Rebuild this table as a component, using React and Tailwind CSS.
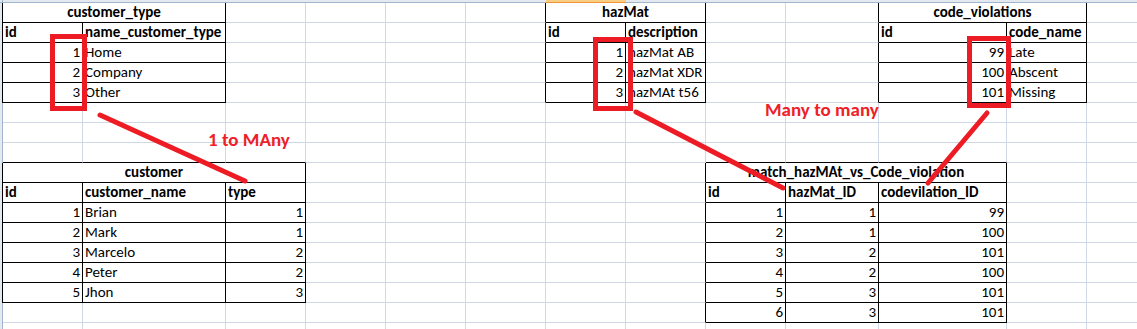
import React from "react";

const tables = [
  { r0: 1, c0: 1, c1: 2, title: "customer_type", headers: ["id", "name_customer_type"], rows: [[1, "Home"], [2, "Company"], [3, "Other"]] },
  { r0: 1, c0: 7, c1: 8, title: "hazMat", headers: ["id", "description"], rows: [[1, "hazMat AB"], [2, "hazMat XDR"], [3, "hazMAt t56"]] },
  { r0: 1, c0: 11, c1: 12, title: "code_violations", headers: ["id", "code_name"], rows: [[99, "Late"], [100, "Abscent"], [101, "Missing"]] },
  { r0: 9, c0: 1, c1: 3, title: "customer", headers: ["id", "customer_name", "type"], rows: [[1, "Brian", 1], [2, "Mark", 1], [3, "Marcelo", 2], [4, "Peter", 2], [5, "Jhon", 3]] },
  { r0: 9, c0: 9, c1: 11, title: "match_hazMAt_vs_Code_violation", headers: ["id", "hazMat_ID", "codevilation_ID"], rows: [[1, 1, 99], [2, 1, 100], [3, 2, 101], [4, 2, 100], [5, 3, 101], [6, 3, 101]] },
];

const NROWS = 17;
const NCOLS = 13;

function tableAt(r, c) {
  for (const t of tables) {
    const r1 = t.r0 + 1 + t.rows.length;
    if (r >= t.r0 && r <= r1 && c >= t.c0 && c <= t.c1) return t;
  }
  return null;
}

function cellContent(r, c) {
  const t = tableAt(r, c);
  if (!t) return null;
  const i = r - t.r0;
  const j = c - t.c0;
  if (i === 0) return { text: t.title, bold: true, align: "center", span: t.c1 - t.c0 + 1, start: j === 0 };
  if (i === 1) return { text: t.headers[j], bold: true, align: "left" };
  const v = t.rows[i - 2][j];
  return { text: String(v), bold: false, align: typeof v === "number" ? "right" : "left" };
}

const spanClass = { 1: "", 2: "col-span-2", 3: "col-span-3" };

function Sheet() {
  const cells = [];
  for (let c = 0; c <= NCOLS; c++) {
    const sel = c === 7;
    cells.push(
      <div
        key={`h-${c}`}
        className={
          sel
            ? "bg-[#f8cd84] border-b border-b-[#f29436]"
            : c === 0
            ? "bg-[#e4e9f0] border-b border-r border-b-[#9eb6ce] border-r-[#9eb6ce]"
            : "bg-[#e4e9f0] border-b border-b-[#9eb6ce]"
        }
      />
    );
  }
  for (let r = 1; r <= NROWS; r++) {
    cells.push(
      <div
        key={`l-${r}`}
        className={
          tableAt(r, 1)
            ? "bg-[#e4e9f0] border-r border-r-black"
            : "bg-[#e4e9f0] border-r border-r-[#9eb6ce]"
        }
      />
    );
    for (let c = 1; c <= NCOLS; c++) {
      const info = cellContent(r, c);
      if (info && info.span && !info.start) continue;
      const span = info && info.span ? info.span : 1;
      const lastC = c + span - 1;
      const inT = !!tableAt(r, c);
      const rightBlack = inT || !!tableAt(r, lastC + 1);
      let bottomBlack = false;
      for (let k = c; k <= lastC; k++) {
        if (tableAt(r, k) || tableAt(r + 1, k)) bottomBlack = true;
      }
      const cls = [
        "flex items-end whitespace-nowrap px-[2px] pb-[1px] text-[15px] leading-[17px] text-black border-r border-b",
        rightBlack ? "border-r-black" : "border-r-[#d0d7e5]",
        bottomBlack ? "border-b-black" : "border-b-[#d0d7e5]",
        spanClass[span],
        info && info.bold ? "font-bold" : "",
        info && info.align === "right" ? "justify-end" : info && info.align === "center" ? "justify-center" : "justify-start",
      ].join(" ");
      cells.push(
        <div key={`${r}-${c}`} className={cls}>
          {info ? info.text : ""}
        </div>
      );
    }
  }
  return (
    <div className="grid grid-cols-[3px_80px_143px_80px_80px_80px_80px_80px_80px_80px_93px_128px_80px_80px] grid-rows-[3px_repeat(17,20px)]">
      {cells}
    </div>
  );
}

export default function App() {
  return (
    <div
      className="relative w-[1137px] h-[329px] overflow-hidden bg-white"
      style={{ fontFamily: "Carlito, Calibri, Lato, 'Liberation Sans', sans-serif" }}
    >
      <Sheet />
      <svg className="absolute left-0 top-0" width="1137" height="329" viewBox="0 0 1137 329">
        <g fill="none" stroke="#ed1c24" strokeWidth="5">
          <rect x="52.5" y="36.5" width="32" height="72" />
          <rect x="595.5" y="39.5" width="35" height="69" />
          <rect x="969.5" y="38.5" width="39" height="67" />
        </g>
        <g stroke="#ed1c24" strokeWidth="5" strokeLinecap="round">
          <line x1="100" y1="115" x2="245" y2="181" />
          <line x1="636" y1="112" x2="783" y2="188" />
          <line x1="987" y1="113" x2="928" y2="183" />
        </g>
      </svg>
      <div className="absolute left-[208px] top-[129px] text-[19px] leading-[22px] font-bold text-[#ee2028] whitespace-nowrap">
        1 to MAny
      </div>
      <div className="absolute left-[765px] top-[99px] text-[19px] leading-[22px] font-bold text-[#ee2028] whitespace-nowrap">
        Many to many
      </div>
    </div>
  );
}
